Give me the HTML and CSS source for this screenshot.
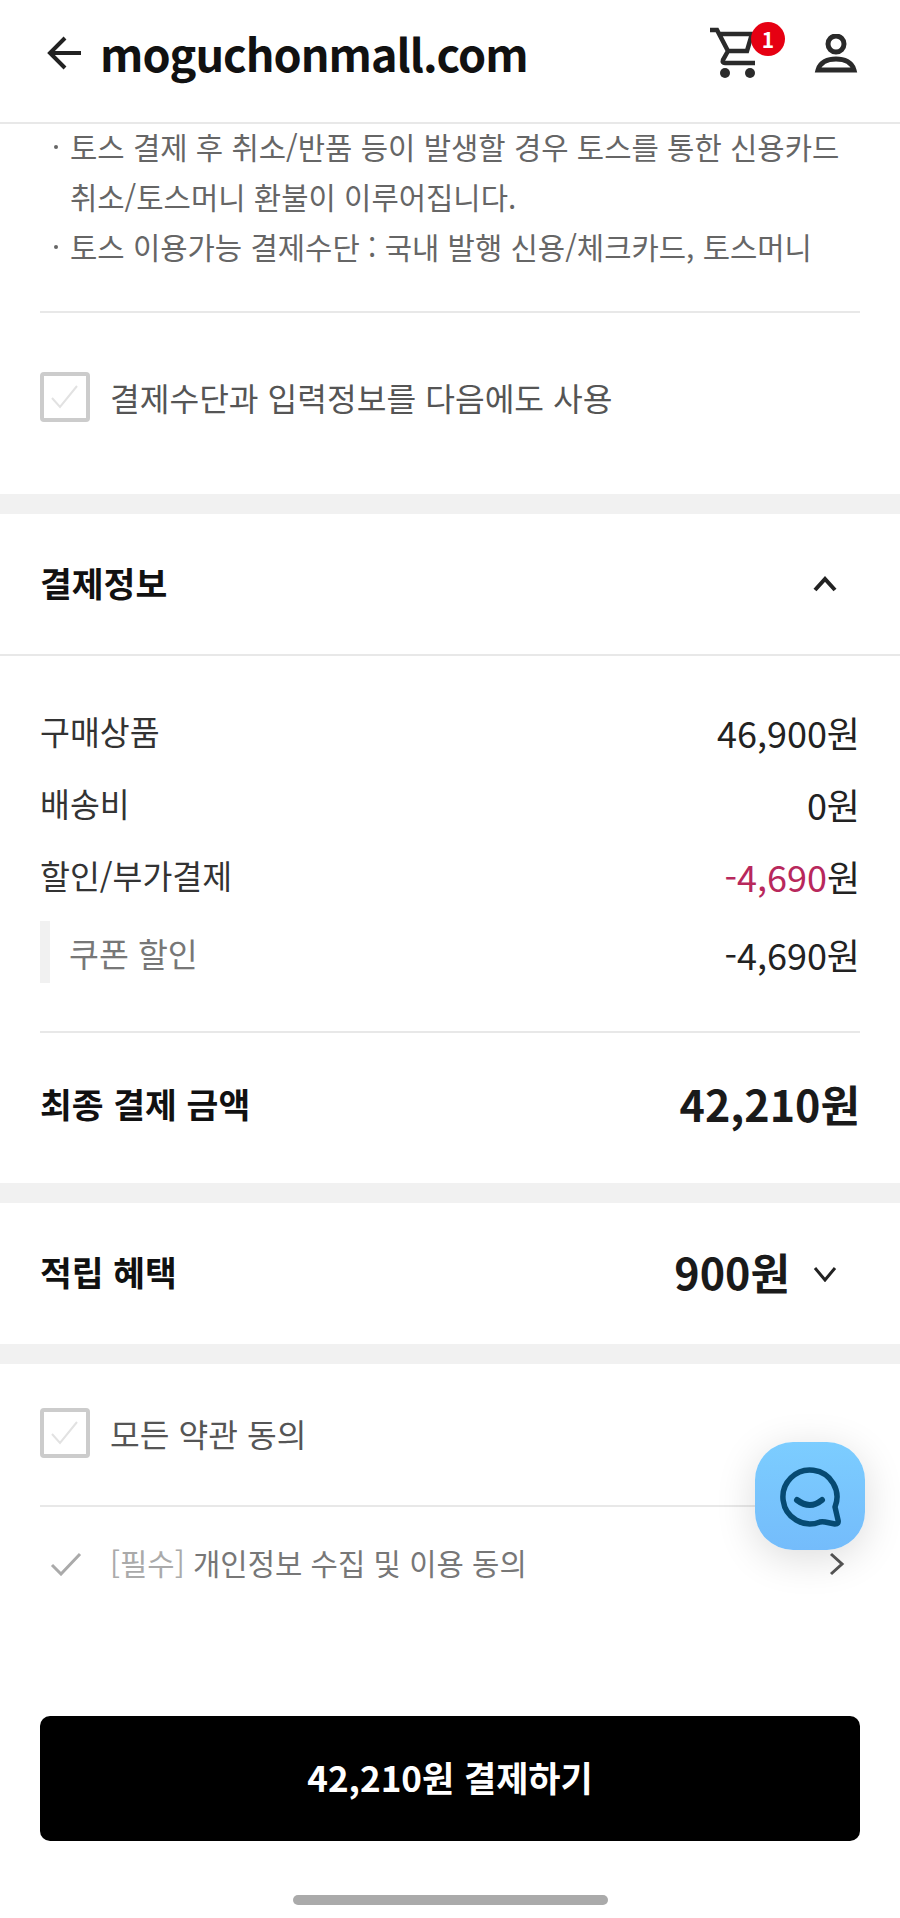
FILE: index.html
```html
<!DOCTYPE html>
<html lang="ko">
<head>
  <meta charset="UTF-8" />
  <title>moguchonmall.com</title>
  <link rel="stylesheet" href="styles.css">
</head>
<body>
  <header class="top-bar">
    <svg class="back-icon" width="36" height="36" viewBox="0 0 36 36"><path d="M34 18H4M18 3L3 18l15 15" /></svg>
    <h1 class="site-title">moguchonmall.com</h1>
    <div class="cart">
      <svg class="cart-icon" width="54" height="58" viewBox="0 0 54 58"><path d="M2 6h7l11 21h19l5-17H11M20 27l-5 9q-1 3 2 3h30" /><circle cx="17" cy="49" r="5" /><circle cx="42" cy="49" r="5" /></svg>
      <span class="cart-badge">1</span>
    </div>
    <svg class="user-icon" width="44" height="44" viewBox="0 0 44 44"><circle cx="22" cy="10" r="8" /><path d="M4 36c2-8 10-11 18-11s16 3 18 11z" /></svg>
  </header>

  <section class="notice">
    <ul class="notice-list">
      <li>토스 결제 후 취소/반품 등이 발생할 경우 토스를 통한 신용카드 취소/토스머니 환불이 이루어집니다.</li>
      <li>토스 이용가능 결제수단 : 국내 발행 신용/체크카드, 토스머니</li>
    </ul>
    <div class="check-row save-row">
      <span class="checkbox"><svg width="30" height="24" viewBox="0 0 30 24"><path d="M2 13l8 9L27 1" /></svg></span>
      <span class="check-label">결제수단과 입력정보를 다음에도 사용</span>
    </div>
  </section>

  <section class="band-section">
    <div class="pay-head">
      <h2 class="section-title">결제정보</h2>
      <svg class="chevron" width="24" height="16" viewBox="0 0 24 16"><path d="M2 14L12 3l10 11" /></svg>
    </div>
    <div class="pay-body">
      <div class="pay-row"><span>구매상품</span><span class="amount">46,900원</span></div>
      <div class="pay-row"><span>배송비</span><span class="amount">0원</span></div>
      <div class="pay-row"><span>할인/부가결제</span><span class="amount"><em class="minus">-4,690</em>원</span></div>
      <div class="pay-row sub-row"><span class="sub-label">쿠폰 할인</span><span class="amount">-4,690원</span></div>
      <div class="total-row">
        <h2 class="section-title">최종 결제 금액</h2>
        <span class="big-amount">42,210원</span>
      </div>
    </div>
  </section>

  <section class="band-section reward-row">
    <h2 class="section-title">적립 혜택</h2>
    <span class="big-amount">900원</span>
    <svg class="chevron thin" width="24" height="16" viewBox="0 0 24 16"><path d="M2 2l10 12L22 2" /></svg>
  </section>

  <section class="band-section terms">
    <div class="check-row all-row">
      <span class="checkbox"><svg width="30" height="24" viewBox="0 0 30 24"><path d="M2 13l8 9L27 1" /></svg></span>
      <span class="check-label">모든 약관 동의</span>
    </div>
    <div class="term-row">
      <svg class="term-check" width="32" height="24" viewBox="0 0 32 24"><path d="M2 13l9 9L30 2" /></svg>
      <span class="term-text"><span class="term-tag">[필수]</span> 개인정보 수집 및 이용 동의</span>
      <svg class="term-arrow" width="16" height="24" viewBox="0 0 16 24"><path d="M2 2l11 10L2 22" /></svg>
    </div>
    <button class="pay-btn">42,210원 결제하기</button>
  </section>

  <div class="chat-fab">
    <svg width="110" height="108" viewBox="0 0 110 108"><path d="M65 80A27 27 0 1 1 80 65l3 13q1 4-3 4l-10-2q-3-.5-5 0z" /><path class="smile" d="M42 58q13 10 25 0" /></svg>
  </div>
  <div class="home-bar"></div>
</body>
</html>
```

FILE: styles.css
```css
* { box-sizing: border-box; }
body {
  margin: 0;
  width: 900px;
  height: 1918px;
  overflow: hidden;
  position: relative;
  background: white;
  color: #222;
  font-family: "Noto Sans CJK KR", "Noto Sans", sans-serif;
}
svg { display: block; fill: none; }

.top-bar {
  height: 124px;
  padding: 0 42px 17px 47px;
  display: flex;
  align-items: center;
  border-bottom: 2px solid #e8e8e8;
}
.back-icon { stroke: #222; stroke-width: 4; }
.site-title {
  margin: 0 auto 0 17px;
  font-size: 45px;
  font-weight: 700;
  line-height: 60px;
  letter-spacing: -1px;
  color: #111;
}
.cart { position: relative; margin-right: 52px; }
.cart-icon { stroke: #2a2a2a; stroke-width: 4.5; }
.cart-icon circle { fill: #2a2a2a; stroke: none; }
.cart-badge {
  position: absolute;
  top: -2px;
  left: 43px;
  width: 34px;
  height: 34px;
  border-radius: 50%;
  background: #e60012;
  color: white;
  font-size: 21px;
  font-weight: 700;
  line-height: 34px;
  text-align: center;
}
.user-icon { stroke: #2a2a2a; stroke-width: 5; margin-top: 6px; }

.notice { display: flow-root; padding: 0 40px; height: 370px; }
.notice-list {
  margin: -2px 0 0;
  padding: 0 0 39px 30px;
  list-style: none;
  font-size: 29.7px;
  line-height: 50px;
  word-break: keep-all;
  color: #666;
  border-bottom: 2px solid #e8e8e8;
}
.notice-list li { position: relative; }
.notice-list li::before {
  content: "";
  position: absolute;
  left: -16px;
  top: 23px;
  width: 4px;
  height: 4px;
  border-radius: 50%;
  background: #666;
}

.check-row { display: flex; align-items: center; gap: 20px; }
.save-row { padding-top: 59px; }
.checkbox {
  width: 50px;
  height: 50px;
  border: 4px solid #ccc;
  border-radius: 4px;
  display: flex;
  align-items: center;
  justify-content: center;
  flex: none;
}
.checkbox svg { stroke: #e2e2e2; stroke-width: 2; }
.check-label { font-size: 32.3px; line-height: 50px; color: #555; }

.band-section { border-top: 20px solid #f1f1f1; }
.pay-head {
  height: 142px;
  padding: 0 63px 0 40px;
  display: flex;
  align-items: center;
  justify-content: space-between;
  border-bottom: 2px solid #e8e8e8;
}
.section-title {
  margin: 0;
  padding-bottom: 5px;
  font-size: 34.6px;
  font-weight: 700;
  line-height: 46px;
  color: #111;
}
.chevron { stroke: #222; stroke-width: 4; }
.chevron.thin { stroke-width: 3; }

.pay-body { padding: 38px 40px 0; height: 527px; }
.pay-row {
  height: 72px;
  display: flex;
  align-items: center;
  justify-content: space-between;
  font-size: 32.5px;
  color: #333;
}
.amount { padding-top: 4px; font-size: 36px; color: #222; }
.minus { font-style: normal; color: #b8285c; }
.sub-row {
  height: 62px;
  margin-top: 11px;
  padding-left: 19px;
  border-left: 10px solid #f1f1f1;
}
.sub-label { color: #777; }

.total-row {
  margin-top: 48px;
  height: 146px;
  display: flex;
  align-items: center;
  justify-content: space-between;
  border-top: 2px solid #e8e8e8;
}
.big-amount {
  padding-bottom: 5px;
  font-size: 43px;
  font-weight: 700;
  line-height: 60px;
  color: #1a1a1a;
}

.reward-row {
  height: 161px;
  padding: 0 63px 0 40px;
  display: flex;
  align-items: center;
}
.reward-row .section-title { margin-right: auto; }
.reward-row .big-amount { margin-right: 23px; }

.terms { padding: 0 40px; }
.all-row { padding: 44px 0 47px; border-bottom: 2px solid #e8e8e8; }
.term-row {
  height: 114px;
  padding: 0 0 0 10px;
  display: flex;
  align-items: center;
}
.term-check { stroke: #aaa; stroke-width: 3; flex: none; }
.term-text { margin-left: 28px; padding-bottom: 4px; font-size: 29.7px; color: #777; }
.term-tag { color: #aaa; }
.term-arrow { margin-left: auto; margin-right: 15px; stroke: #555; stroke-width: 3; }

.pay-btn {
  display: block;
  width: 100%;
  height: 125px;
  margin-top: 95px;
  padding-bottom: 6px;
  border: none;
  border-radius: 10px;
  background: #000;
  color: white;
  font-family: inherit;
  font-size: 35px;
  font-weight: 700;
}

.chat-fab {
  position: absolute;
  left: 755px;
  top: 1442px;
  width: 110px;
  height: 108px;
  border-radius: 38px;
  background: linear-gradient(#7ccdff, #74bcfb);
  box-shadow: 0 8px 40px rgba(0, 0, 0, 0.14);
}
.chat-fab svg { stroke: #064a72; stroke-width: 5.5; stroke-linecap: round; stroke-linejoin: round; }
.chat-fab .smile { stroke-width: 6; }

.home-bar {
  position: absolute;
  left: 293px;
  top: 1895px;
  width: 315px;
  height: 10px;
  border-radius: 5px;
  background: #aaa;
}
```
